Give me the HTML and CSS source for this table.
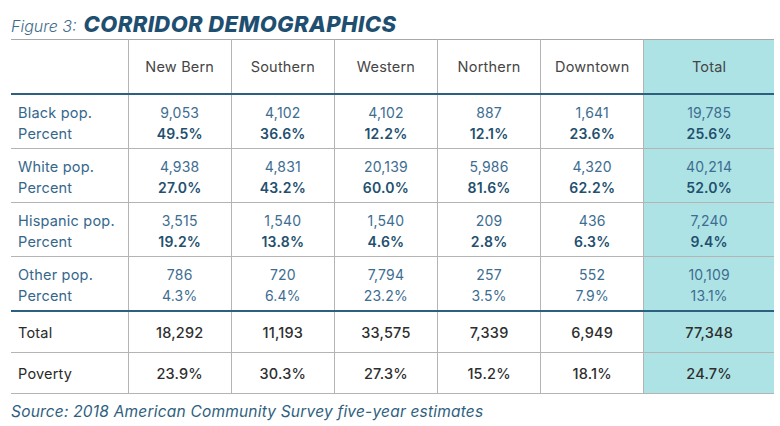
FILE: index.html
```html
<!DOCTYPE html>
<html>
<head>
<meta charset="utf-8">
<link rel="stylesheet" href="styles.css">
</head>
<body>
<div class="page">
  <h1 class="title"><span class="fig">Figure 3:</span> <span class="name">CORRIDOR DEMOGRAPHICS</span></h1>
  <table class="demo">
    <colgroup>
      <col class="c-label"><col class="c-val"><col class="c-val"><col class="c-val"><col class="c-val"><col class="c-val"><col class="c-total">
    </colgroup>
    <thead>
      <tr>
        <th class="lab"></th><th>New Bern</th><th>Southern</th><th>Western</th><th>Northern</th><th>Downtown</th><th class="tot">Total</th>
      </tr>
    </thead>
    <tbody>
      <tr class="grp">
        <td class="lab"><div>Black pop.</div><div>Percent</div></td>
        <td><div>9,053</div><div class="pct">49.5%</div></td>
        <td><div>4,102</div><div class="pct">36.6%</div></td>
        <td><div>4,102</div><div class="pct">12.2%</div></td>
        <td><div>887</div><div class="pct">12.1%</div></td>
        <td><div>1,641</div><div class="pct">23.6%</div></td>
        <td class="tot"><div>19,785</div><div class="pct">25.6%</div></td>
      </tr>
      <tr class="grp">
        <td class="lab"><div>White pop.</div><div>Percent</div></td>
        <td><div>4,938</div><div class="pct">27.0%</div></td>
        <td><div>4,831</div><div class="pct">43.2%</div></td>
        <td><div>20,139</div><div class="pct">60.0%</div></td>
        <td><div>5,986</div><div class="pct">81.6%</div></td>
        <td><div>4,320</div><div class="pct">62.2%</div></td>
        <td class="tot"><div>40,214</div><div class="pct">52.0%</div></td>
      </tr>
      <tr class="grp">
        <td class="lab"><div>Hispanic pop.</div><div>Percent</div></td>
        <td><div>3,515</div><div class="pct">19.2%</div></td>
        <td><div>1,540</div><div class="pct">13.8%</div></td>
        <td><div>1,540</div><div class="pct">4.6%</div></td>
        <td><div>209</div><div class="pct">2.8%</div></td>
        <td><div>436</div><div class="pct">6.3%</div></td>
        <td class="tot"><div>7,240</div><div class="pct">9.4%</div></td>
      </tr>
      <tr class="grp last">
        <td class="lab"><div>Other pop.</div><div>Percent</div></td>
        <td><div>786</div><div>4.3%</div></td>
        <td><div>720</div><div>6.4%</div></td>
        <td><div>7,794</div><div>23.2%</div></td>
        <td><div>257</div><div>3.5%</div></td>
        <td><div>552</div><div>7.9%</div></td>
        <td class="tot"><div>10,109</div><div>13.1%</div></td>
      </tr>
      <tr class="sum">
        <td class="lab">Total</td>
        <td>18,292</td><td>11,193</td><td>33,575</td><td>7,339</td><td>6,949</td><td class="tot">77,348</td>
      </tr>
      <tr class="sum">
        <td class="lab">Poverty</td>
        <td>23.9%</td><td>30.3%</td><td>27.3%</td><td>15.2%</td><td>18.1%</td><td class="tot">24.7%</td>
      </tr>
    </tbody>
  </table>
  <p class="source">Source: 2018 American Community Survey five-year estimates</p>
</div>
</body>
</html>
```

FILE: styles.css
```css
html, body {
  margin: 0;
  padding: 0;
  background: #ffffff;
}

body {
  font-family: Inter, "DejaVu Sans", sans-serif;
}

.page {
  padding: 9px 6px 0 11px;
}

.title {
  margin: 0;
  height: 30px;
  line-height: 24px;
  font-weight: normal;
  white-space: nowrap;
}

.title .fig {
  font-style: italic;
  font-size: 16px;
  color: #3f6b8b;
  font-weight: 300;
}

.title .name {
  font-style: italic;
  font-weight: 800;
  font-size: 22px;
  color: #1f4f70;
  letter-spacing: 0.4px;
  margin-left: -2px;
}

.demo {
  width: 763px;
  border-collapse: collapse;
  table-layout: fixed;
  font-size: 14px;
  letter-spacing: 0.2px;
}

.c-label { width: 117px; }
.c-val { width: 103px; }
.c-total { width: 130px; }

.demo th,
.demo td {
  border: 1.5px solid #b4b4b4;
  text-align: center;
  padding: 0;
}

.demo tr > :first-child { border-left: none; }
.demo tr > :last-child { border-right: none; }

.demo th {
  height: 53px;
  font-weight: normal;
  font-size: 14.5px;
  color: #454545;
  border-top: 1.5px solid #a8a8a8;
  border-bottom: 2.5px solid #2c5f80;
}

.demo .lab {
  text-align: left;
  padding-left: 7px;
}

.demo .tot {
  background: #ade3e5;
}

.grp td {
  height: 46px;
  vertical-align: top;
  padding-top: 7px;
  line-height: 21px;
  color: #3d6d90;
}

.grp td.lab {
  color: #35678c;
  font-size: 14.5px;
}

.grp .pct {
  font-weight: 600;
  color: #234f6e;
}

.grp.last td {
  border-bottom: 2.5px solid #2c5f80;
}

.sum td {
  height: 40px;
  color: #2e2e2e;
  font-weight: 500;
  font-size: 14.5px;
}

.sum td.lab {
  color: #2a2a2a;
  font-weight: normal;
}

.source {
  margin: 8px 0 0;
  font-style: italic;
  font-size: 15.5px;
  color: #2f5f80;
  letter-spacing: 0.2px;
}
```
